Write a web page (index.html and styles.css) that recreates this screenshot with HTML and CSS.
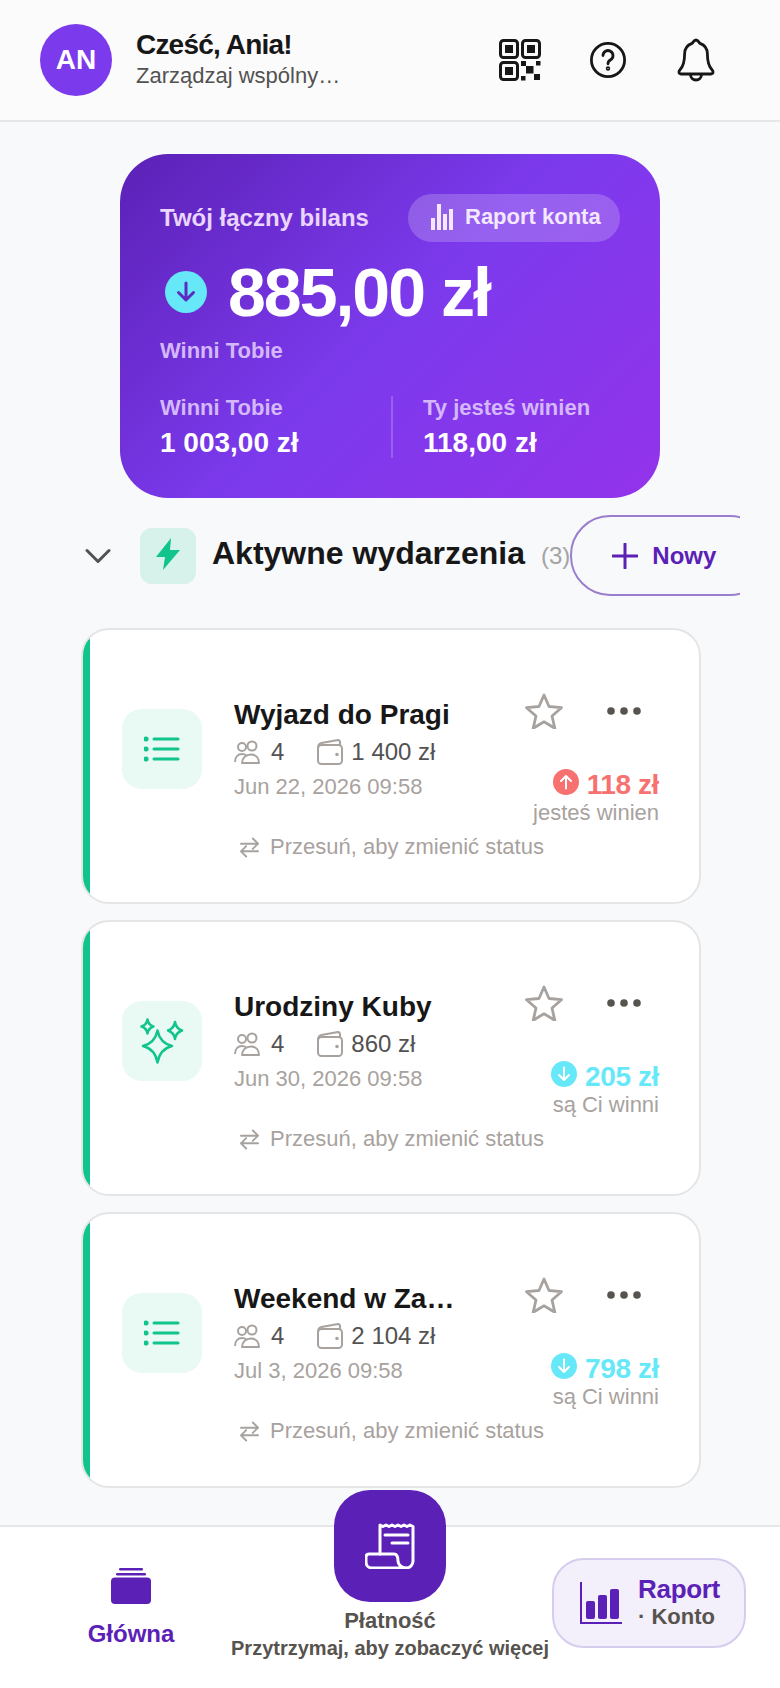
FILE: index.html
```html
<!DOCTYPE html>
<html>
    <head>
        <meta charset="utf-8">
        <title>Wydarzenia</title>
        <link rel="stylesheet" href="styles.css">
    </head>
    <body>
        <div class="app">
            <header class="topbar">
                <div class="avatar">AN</div>
                <div class="greeting">
                    <div class="greeting-name">Cześć, Ania!</div>
                    <div class="greeting-sub">Zarządzaj wspólny…</div>
                </div>
                <div class="topbar-icons">
                    <svg class="icon-btn" viewBox="0 0 48 48" fill="none" stroke="#171717" stroke-width="3">
                        <rect x="4.5" y="4.5" width="17" height="17" rx="3"/>
                        <rect x="26.500" y="4.5" width="17" height="17" rx="3"/>
                        <rect x="4.5" y="26.500" width="17" height="17" rx="3"/>
                        <g fill="#171717" stroke="none">
                            <rect x="9" y="9" width="8" height="8"/>
                            <rect x="31" y="9" width="8" height="8"/>
                            <rect x="9" y="31" width="8" height="8"/>
                            <rect x="25" y="25" width="5" height="5"/>
                            <rect x="40" y="25" width="4.500" height="4.500"/>
                            <rect x="30" y="30" width="7.500" height="7.500"/>
                            <rect x="25" y="40" width="4.500" height="4.500"/>
                            <rect x="38" y="38" width="6" height="6"/>
                        </g>
                    </svg>
                    <svg class="icon-btn" viewBox="0 0 48 48" fill="none" stroke="#171717" stroke-width="2.800" stroke-linecap="round">
                        <circle cx="24" cy="24" r="16.600"/>
                        <path d="M19 19.500a5 5 0 1 1 7.600 4.300c-1.700 1-2.600 2-2.600 4"/>
                        <circle cx="24" cy="32.500" r="0.800"/>
                    </svg>
                    <svg class="icon-btn" viewBox="0 0 48 48" fill="none" stroke="#171717" stroke-width="2.800" stroke-linejoin="round">
                        <path d="M24 4c2.200 0 2.800 2.400 4 3.400 4.600 1.600 7.400 5.400 7.400 10.600 0 8 1.400 12.400 4.600 15.800 1.400 1.500 1.600 4.200-1 4.200H9c-2.600 0-2.400-2.700-1-4.200 3.200-3.400 4.600-7.800 4.600-15.800 0-5.200 2.800-9 7.400-10.600C21.200 6.400 21.800 4 24 4z"/>
                        <path d="M18.500 38.500a5.500 5.500 0 0 0 11 0"/>
                    </svg>
                </div>
            </header>

            <main class="content">
                <section class="balance">
                    <div class="balance-top">
                        <span class="balance-title">Twój łączny bilans</span>
                        <span class="report-pill">
                            <svg class="pill-bars" viewBox="0 0 22 26" fill="#f3e8ff">
                                <rect x="0" y="14" width="4" height="12"/>
                                <rect x="6" y="0" width="4" height="26"/>
                                <rect x="12" y="10" width="4" height="16"/>
                                <rect x="18" y="5" width="4" height="21"/>
                            </svg>
                            Raport konta
                        </span>
                    </div>
                    <div class="balance-main">
                        <svg class="balance-arrow" viewBox="0 0 42 42">
                            <circle cx="21" cy="21" r="21" fill="#67e8f9"/>
                            <path d="M21 12v17M13.500 21.500 21 29l7.500-7.500" fill="none" stroke="#5b2bc4" stroke-width="3" stroke-linecap="round" stroke-linejoin="round"/>
                        </svg>
                        <span class="balance-amount">885,00 zł</span>
                    </div>
                    <div class="balance-caption">Winni Tobie</div>
                    <div class="balance-stats">
                        <div class="stat">
                            <div class="stat-label">Winni Tobie</div>
                            <div class="stat-value">1 003,00 zł</div>
                        </div>
                        <div class="stat stat-right">
                            <div class="stat-label">Ty jesteś winien</div>
                            <div class="stat-value">118,00 zł</div>
                        </div>
                    </div>
                </section>

                <div class="section-head">
                    <svg class="chevron" viewBox="0 0 26 16" fill="none" stroke="#525252" stroke-width="3" stroke-linecap="round" stroke-linejoin="round">
                        <path d="M2 2.500 13 13.500 24 2.500"/>
                    </svg>
                    <div class="bolt-tile">
                        <svg class="bolt" viewBox="0 0 24 32" fill="#10c48c">
                            <path d="M15 0 0 19h9l-2 13 17-20h-10z"/>
                        </svg>
                    </div>
                    <span class="section-title">Aktywne wydarzenia</span>
                    <span class="section-count">(3)</span>
                    <div class="new-btn">
                        <svg class="plus" viewBox="0 0 26 26" stroke="#5b21b6" stroke-width="3" stroke-linecap="round">
                            <path d="M13 1v24M1 13h24"/>
                        </svg>
                        Nowy
                    </div>
                </div>

                <div class="events">
                    <article class="event">
                        <div class="event-tile">
                            <svg class="tile-icon" viewBox="0 0 36 26" fill="none" stroke="#10c48c" stroke-width="3" stroke-linecap="round">
                                <path d="M10 3h24M10 13h24M10 23h24"/>
                                <path d="M2 3h.1M2 13h.1M2 23h.1" stroke-width="5"/>
                            </svg>
                        </div>
                        <div class="event-body">
                            <div class="event-main">
                                <div class="event-info">
                                    <div class="event-title">Wyjazd do Pragi</div>
                                    <div class="event-meta">
                                        <svg class="meta-icon" viewBox="0 0 26 24"><use href="#people"/></svg>
                                        <span class="meta-count">4</span>
                                        <svg class="meta-icon" viewBox="0 0 26 26"><use href="#wallet"/></svg>
                                        <span>1 400 zł</span>
                                    </div>
                                    <div class="event-date">Jun 22, 2026 09:58</div>
                                </div>
                                <div class="event-side">
                                    <div class="event-actions">
                                        <svg class="star" viewBox="0 0 38 36"><use href="#star"/></svg>
                                        <svg class="dots" viewBox="0 0 34 8"><use href="#dots"/></svg>
                                    </div>
                                    <div class="event-amount amount-owe">
                                        <svg class="amount-icon" viewBox="0 0 26 26">
                                            <circle cx="13" cy="13" r="13" fill="#f87171"/>
                                            <path d="M13 19.500V7.500M8 12l5-5 5 5" fill="none" stroke="#fff" stroke-width="2" stroke-linecap="round" stroke-linejoin="round"/>
                                        </svg>
                                        118 zł
                                    </div>
                                    <div class="event-note">jesteś winien</div>
                                </div>
                            </div>
                            <div class="event-hint">
                                <svg class="hint-icon" viewBox="0 0 20 22"><use href="#swap"/></svg>
                                Przesuń, aby zmienić status
                            </div>
                        </div>
                    </article>

                    <article class="event">
                        <div class="event-tile">
                            <svg class="sparkle-icon" viewBox="0 0 44 46" fill="none" stroke="#10c48c" stroke-width="2.500" stroke-linejoin="round">
                                <path d="M17.500 12.500Q20 25 32 28 20 31 17.500 44.500 15 31 3 28 15 25 17.500 12.500z"/>
                                <path d="M7.500 1.500Q8.500 7 13.500 8.500 8.500 10 7.500 15.500 6.500 10 1.500 8.500 6.500 7 7.500 1.500z"/>
                                <path d="M35 4Q36 10.500 42 12.500 36 14.500 35 21 34 14.500 28 12.500 34 10.500 35 4z"/>
                            </svg>
                        </div>
                        <div class="event-body">
                            <div class="event-main">
                                <div class="event-info">
                                    <div class="event-title">Urodziny Kuby</div>
                                    <div class="event-meta">
                                        <svg class="meta-icon" viewBox="0 0 26 24"><use href="#people"/></svg>
                                        <span class="meta-count">4</span>
                                        <svg class="meta-icon" viewBox="0 0 26 26"><use href="#wallet"/></svg>
                                        <span>860 zł</span>
                                    </div>
                                    <div class="event-date">Jun 30, 2026 09:58</div>
                                </div>
                                <div class="event-side">
                                    <div class="event-actions">
                                        <svg class="star" viewBox="0 0 38 36"><use href="#star"/></svg>
                                        <svg class="dots" viewBox="0 0 34 8"><use href="#dots"/></svg>
                                    </div>
                                    <div class="event-amount amount-get">
                                        <svg class="amount-icon" viewBox="0 0 26 26"><use href="#arrow-get"/></svg>
                                        205 zł
                                    </div>
                                    <div class="event-note">są Ci winni</div>
                                </div>
                            </div>
                            <div class="event-hint">
                                <svg class="hint-icon" viewBox="0 0 20 22"><use href="#swap"/></svg>
                                Przesuń, aby zmienić status
                            </div>
                        </div>
                    </article>

                    <article class="event">
                        <div class="event-tile">
                            <svg class="tile-icon" viewBox="0 0 36 26" fill="none" stroke="#10c48c" stroke-width="3" stroke-linecap="round">
                                <path d="M10 3h24M10 13h24M10 23h24"/>
                                <path d="M2 3h.1M2 13h.1M2 23h.1" stroke-width="5"/>
                            </svg>
                        </div>
                        <div class="event-body">
                            <div class="event-main">
                                <div class="event-info">
                                    <div class="event-title">Weekend w Za…</div>
                                    <div class="event-meta">
                                        <svg class="meta-icon" viewBox="0 0 26 24"><use href="#people"/></svg>
                                        <span class="meta-count">4</span>
                                        <svg class="meta-icon" viewBox="0 0 26 26"><use href="#wallet"/></svg>
                                        <span>2 104 zł</span>
                                    </div>
                                    <div class="event-date">Jul 3, 2026 09:58</div>
                                </div>
                                <div class="event-side">
                                    <div class="event-actions">
                                        <svg class="star" viewBox="0 0 38 36"><use href="#star"/></svg>
                                        <svg class="dots" viewBox="0 0 34 8"><use href="#dots"/></svg>
                                    </div>
                                    <div class="event-amount amount-get">
                                        <svg class="amount-icon" viewBox="0 0 26 26"><use href="#arrow-get"/></svg>
                                        798 zł
                                    </div>
                                    <div class="event-note">są Ci winni</div>
                                </div>
                            </div>
                            <div class="event-hint">
                                <svg class="hint-icon" viewBox="0 0 20 22"><use href="#swap"/></svg>
                                Przesuń, aby zmienić status
                            </div>
                        </div>
                    </article>
                </div>
            </main>

            <nav class="bottom-nav">
                <div class="nav-home">
                    <svg class="nav-home-icon" viewBox="0 0 40 36" fill="#5b21b6">
                        <rect x="8" y="0" width="24" height="2.500" rx="1.200"/>
                        <rect x="5" y="5" width="30" height="2.500" rx="1.200"/>
                        <rect x="0" y="9.500" width="40" height="26.500" rx="4"/>
                    </svg>
                    <span class="nav-home-label">Główna</span>
                </div>
                <div class="nav-pay">
                    <div class="pay-btn">
                        <svg class="pay-icon" viewBox="0 0 50 46" fill="none" stroke="#fff" stroke-width="3" stroke-linecap="round" stroke-linejoin="round">
                            <path d="M15 31V2l3 1.500L21 2l3 1.500L27 2l3 1.500L33 2l3 1.500L39 2l3 1.500L45 2l3 1.500V38c0 4-3 7-7 7"/>
                            <path d="M20 12h23M27 20h16"/>
                            <path d="M29 31c3 0 4 3 4 7s4 7 8 7H7c-4 0-6-3-6-6v-5c0-2 1-3 3-3z"/>
                        </svg>
                    </div>
                    <div class="pay-label">Płatność</div>
                    <div class="pay-sub">Przytrzymaj, aby zobaczyć więcej</div>
                </div>
                <div class="nav-report">
                    <div class="report-box">
                        <svg class="report-icon" viewBox="0 0 42 42" fill="#5b21b6">
                            <rect x="0" y="0" width="2" height="42"/>
                            <rect x="0" y="40" width="42" height="2"/>
                            <rect x="6" y="19" width="9" height="18" rx="2"/>
                            <rect x="18" y="13" width="9" height="24" rx="2"/>
                            <rect x="30" y="7" width="9" height="30" rx="2"/>
                        </svg>
                        <div class="report-text">
                            <div class="report-name">Raport</div>
                            <div class="report-kind">· Konto</div>
                        </div>
                    </div>
                </div>
            </nav>
        </div>

        <!-- shared icons -->
        <svg class="icon-defs">
            <defs>
                <g id="people" fill="none" stroke="#a8a29e" stroke-width="2">
                    <circle cx="8" cy="7" r="4"/>
                    <circle cx="18" cy="6" r="4.500"/>
                    <path d="M1 22c0-5 3-8 7-8 1.500 0 3 .4 4 1.300"/>
                    <path d="M8 23c0-5 4-8.500 9-8.500s8 3.500 8 8.500z" stroke-linejoin="round"/>
                </g>
                <g id="wallet" fill="none" stroke="#a8a29e" stroke-width="2" stroke-linejoin="round">
                    <rect x="1" y="6" width="24" height="19" rx="3.500"/>
                    <path d="M1 9c0-3 1-4.500 3.500-5L21 1c1.500 0 2 1 2 2.500V6"/>
                    <circle cx="20" cy="15.500" r=".8" fill="#a8a29e"/>
                </g>
                <path id="star" d="M19 2l5 11.500 12.500 1.200-9.500 8.300 2.800 12.300L19 28.800 8.200 35.300 11 23 1.500 14.700 14 13.500z" fill="none" stroke="#a8a29e" stroke-width="2.800" stroke-linejoin="round"/>
                <g id="dots" fill="#57534e">
                    <circle cx="4" cy="4" r="3.800"/>
                    <circle cx="17" cy="4" r="3.800"/>
                    <circle cx="30" cy="4" r="3.800"/>
                </g>
                <g id="swap" fill="none" stroke="#a8a29e" stroke-width="2" stroke-linecap="round" stroke-linejoin="round">
                    <path d="M1 7h18M13.500 1.500 19 7l-5.500 5.500"/>
                    <path d="M19 15H1M6.500 9.500 1 15l5.500 5.500"/>
                </g>
                <g id="arrow-get">
                    <circle cx="13" cy="13" r="13" fill="#67e8f9"/>
                    <path d="M13 6.500v12M8 14l5 5 5-5" fill="none" stroke="#fff" stroke-width="2" stroke-linecap="round" stroke-linejoin="round"/>
                </g>
            </defs>
        </svg>
    </body>
</html>
```

FILE: styles.css
```css
body {
    margin: 0;
    font-family: "Liberation Sans", Arial, sans-serif;
    background-color: #f8f9fb;
    color: #171717;
}

.app {
    display: flex;
    flex-direction: column;
    height: 1688px;
    overflow: hidden;
}

.icon-defs {
    display: none;
}

/* top bar */
.topbar {
    display: flex;
    align-items: center;
    flex: 0 0 120px;
    padding: 0 60px 0 40px;
    border-bottom: 2px solid #e7e7e9;
    background-color: #fbfbfc;
}

.avatar {
    display: flex;
    align-items: center;
    justify-content: center;
    width: 72px;
    height: 72px;
    margin-right: 24px;
    border-radius: 50%;
    background-color: #7c3aed;
    color: white;
    font-size: 28px;
    font-weight: bold;
}

.greeting {
    flex: 1;
}

.greeting-name {
    font-size: 28px;
    font-weight: bold;
    letter-spacing: -0.8px;
    line-height: 32px;
}

.greeting-sub {
    font-size: 22px;
    line-height: 30px;
    color: #525252;
}

.topbar-icons {
    display: flex;
    gap: 40px;
}

.icon-btn {
    width: 48px;
    height: 48px;
}

/* balance card */
.content {
    flex: 1;
    padding: 32px 80px 0 81px;
    overflow: hidden;
}

.balance {
    width: 540px;
    height: 344px;
    box-sizing: border-box;
    margin-left: 39px;
    padding: 40px;
    border-radius: 48px;
    background: linear-gradient(135deg, #5b21b6 0%, #7c3aed 50%, #9333ea 100%);
    color: white;
}

.balance-top {
    display: flex;
    align-items: center;
    justify-content: space-between;
    height: 48px;
}

.balance-title {
    font-size: 24px;
    font-weight: bold;
    color: #e9d5ff;
}

.report-pill {
    display: flex;
    align-items: center;
    gap: 12px;
    box-sizing: border-box;
    width: 212px;
    height: 48px;
    padding-left: 23px;
    padding-bottom: 2px;
    border-radius: 24px;
    background-color: rgba(255, 255, 255, 0.2);
    font-size: 22px;
    font-weight: bold;
    color: #f3e8ff;
}

.pill-bars {
    width: 22px;
    height: 26px;
}

.balance-main {
    display: flex;
    align-items: center;
    margin-top: 8px;
}

.balance-arrow {
    width: 42px;
    height: 42px;
    margin-left: 5px;
    margin-right: 21px;
}

.balance-amount {
    font-size: 68px;
    line-height: 84px;
    font-weight: bold;
    letter-spacing: -2px;
}

.balance-caption {
    margin-top: 3px;
    font-size: 22px;
    line-height: 27px;
    font-weight: bold;
    color: #d4b8fb;
}

.balance-stats {
    display: flex;
    margin-top: 32px;
}

.stat {
    flex: none;
    width: 231px;
    height: 62px;
}

.stat-right {
    box-sizing: border-box;
    width: 229px;
    padding-left: 30px;
    border-left: 2px solid rgba(255, 255, 255, 0.2);
}

.stat-label {
    font-size: 22px;
    line-height: 24px;
    font-weight: bold;
    color: #d4b8fb;
}

.stat-value {
    margin-top: 7px;
    font-size: 28px;
    line-height: 32px;
    font-weight: bold;
}

/* section heading */
.section-head {
    display: flex;
    align-items: center;
    width: 659px;
    height: 81px;
    margin-top: 17px;
    overflow: hidden;
    white-space: nowrap;
}

.chevron {
    flex: none;
    width: 26px;
    height: 16px;
    margin-left: 4px;
    margin-right: 29px;
}

.bolt-tile {
    display: flex;
    flex: none;
    align-items: center;
    justify-content: center;
    width: 56px;
    height: 56px;
    margin-right: 16px;
    border-radius: 12px;
    background-color: #d7f2ea;
}

.bolt {
    width: 24px;
    height: 32px;
    margin-bottom: 4px;
}

.section-title {
    font-size: 32px;
    font-weight: bold;
    margin-right: 16px;
    margin-bottom: 4px;
}

.section-count {
    font-size: 24px;
    color: #a3a3a3;
}

.new-btn {
    display: flex;
    flex: none;
    align-items: center;
    box-sizing: border-box;
    width: 200px;
    height: 81px;
    padding-left: 40px;
    gap: 14px;
    border: 2px solid #9a7dcc;
    border-radius: 40px;
    font-size: 24px;
    font-weight: bold;
    color: #5b21b6;
}

.plus {
    width: 26px;
    height: 26px;
}

/* event cards */
.events {
    display: flex;
    flex-direction: column;
    gap: 16px;
    margin-top: 32px;
}

.event {
    display: flex;
    box-sizing: border-box;
    width: 620px;
    height: 276px;
    padding: 63px 40px 0 39px;
    border: 2px solid #e5e5e5;
    border-radius: 28px;
    /* status stripe along the left edge */
    background: linear-gradient(#10c48c, #10c48c) left / 7px 100% no-repeat, white;
}

.event-tile {
    display: flex;
    flex: none;
    align-items: center;
    justify-content: center;
    width: 80px;
    height: 80px;
    margin-top: 16px;
    margin-right: 32px;
    border-radius: 20px;
    background-color: #e9f9f4;
}

.tile-icon {
    width: 36px;
    height: 26px;
}

.sparkle-icon {
    width: 44px;
    height: 46px;
}

.event-body {
    flex: 1;
    min-width: 0;
}

.event-main {
    display: flex;
    justify-content: space-between;
}

.event-title {
    margin-top: 4px;
    font-size: 28px;
    line-height: 36px;
    font-weight: bold;
}

.event-meta {
    display: flex;
    align-items: center;
    margin-top: 3px;
    font-size: 24px;
    line-height: 32px;
    color: #525252;
}

.meta-icon {
    width: 26px;
    height: 26px;
    margin-right: 11px;
}

.meta-count {
    margin-right: 33px;
}

.meta-count + .meta-icon {
    margin-right: 8px;
}

.event-date {
    margin-top: 2px;
    font-size: 22px;
    line-height: 34px;
    color: #a8a29e;
}

.event-side {
    display: flex;
    flex-direction: column;
    align-items: flex-end;
}

.event-actions {
    display: flex;
    align-items: center;
    height: 36px;
}

.star {
    width: 38px;
    height: 36px;
    margin-right: 44px;
}

.dots {
    width: 34px;
    height: 8px;
    margin-right: 18px;
}

.event-amount {
    display: flex;
    align-items: center;
    gap: 8px;
    margin-top: 39px;
    font-size: 28px;
    line-height: 34px;
    font-weight: bold;
    letter-spacing: -0.4px;
}

.amount-icon {
    width: 26px;
    height: 26px;
    margin-top: -6px;
}

.amount-owe {
    color: #f87171;
}

.amount-get {
    color: #67e8f9;
}

.event-note {
    margin-top: -2px;
    font-size: 22px;
    line-height: 26px;
    color: #a8a29e;
}

.event-hint {
    display: flex;
    align-items: center;
    gap: 11px;
    margin-top: 4px;
    padding-left: 6px;
    font-size: 22px;
    line-height: 34px;
    color: #a8a29e;
}

.hint-icon {
    width: 19px;
    height: 21px;
}

/* bottom navigation */
.bottom-nav {
    display: grid;
    grid-template-columns: 231px 318px 1fr;
    flex: 0 0 161px;
    border-top: 2px solid #e7e7e9;
    background-color: white;
}

.nav-home {
    display: flex;
    flex-direction: column;
    align-items: center;
    padding-top: 41px;
    padding-left: 31px;
}

.nav-home-icon {
    width: 40px;
    height: 36px;
}

.nav-home-label {
    margin-top: 16px;
    font-size: 24px;
    font-weight: bold;
    color: #5b21b6;
}

.nav-pay {
    display: flex;
    flex-direction: column;
    align-items: center;
    margin-top: -37px;
}

.pay-btn {
    display: flex;
    flex: none;
    align-items: center;
    justify-content: center;
    width: 112px;
    height: 112px;
    border-radius: 36px;
    background-color: #5b21b6;
}

.pay-icon {
    width: 50px;
    height: 46px;
}

.pay-label {
    margin-top: 5px;
    font-size: 22px;
    line-height: 28px;
    font-weight: bold;
    color: #57534e;
}

.pay-sub {
    font-size: 20px;
    line-height: 26px;
    font-weight: bold;
    color: #57534e;
    white-space: nowrap;
}

.nav-report {
    display: flex;
    justify-content: flex-end;
    padding-top: 31px;
    padding-right: 34px;
}

.report-box {
    display: flex;
    align-items: center;
    box-sizing: border-box;
    width: 194px;
    height: 90px;
    padding-left: 26px;
    gap: 16px;
    border: 2px solid #d6cdee;
    border-radius: 32px;
    background-color: #f3effb;
}

.report-icon {
    width: 42px;
    height: 42px;
}

.report-text {
    margin-bottom: 4px;
}

.report-name {
    font-size: 26px;
    line-height: 32px;
    font-weight: bold;
    letter-spacing: -0.3px;
    color: #5b21b6;
}

.report-kind {
    font-size: 22px;
    line-height: 24px;
    font-weight: bold;
    color: #57534e;
}
```
